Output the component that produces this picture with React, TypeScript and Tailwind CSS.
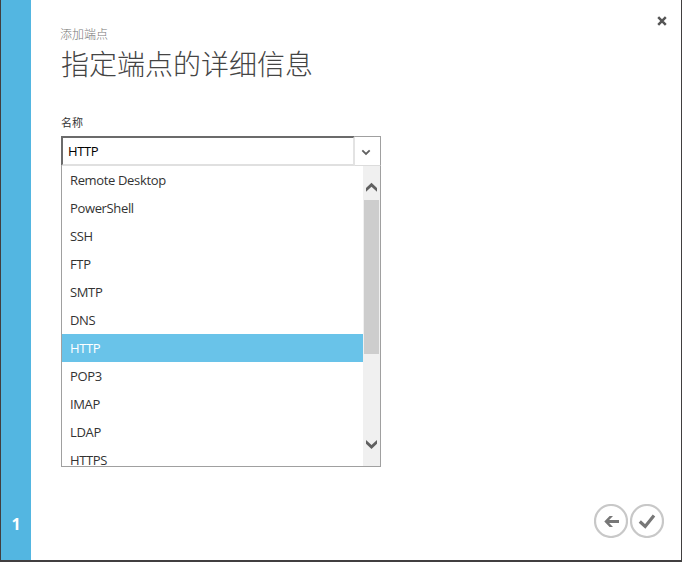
const endpoints = ["Remote Desktop", "PowerShell", "SSH", "FTP", "SMTP", "DNS", "HTTP", "POP3", "IMAP", "LDAP", "HTTPS"];
const selected = "HTTP";

function Scrollbar() {
  return (
    <div className="flex w-[17px] shrink-0 flex-col items-center bg-[#f0f0f0]">
      <div className="flex h-[34px] items-end pb-2">
        <svg width="13" height="10" viewBox="0 0 13 10" fill="#606060">
          <path d="M6.5 .7L12 6v3.7L6.5 4.8 1 9.700V6z" />
        </svg>
      </div>
      <div className="h-[154px] w-[15px] bg-[#cdcdcd]" />
      <div className="flex-1" />
      <div className="flex h-[27px] items-start">
        <svg width="13" height="10" viewBox="0 0 13 10" fill="#606060">
          <path d="M6.5 10L12 4.700V1L6.500 5.900 1 1v3.700z" />
        </svg>
      </div>
    </div>
  );
}

function ComboBox() {
  return (
    <div className="flex h-[331px] w-[320px] flex-col">
      <div className="flex h-[30px]">
        <div className="flex w-[294px] items-center border-2 border-t-[#6b6b6b] border-r-[#e3e3e3] border-b-[#e0e0e0] border-l-[#6b6b6b] pt-[2px] pl-[5px] text-[13px] tracking-[-0.35px] text-black">
          {selected}
        </div>
        <div className="flex w-[26px] items-center justify-center border border-l-0 border-t-[#a0a0a0] border-r-[#a0a0a0] border-b-[#dcdcdc] pt-px pr-[3px]">
          <svg width="10" height="8" viewBox="0 0 10 8" fill="none" stroke="#606060" strokeWidth="1.8">
            <path d="M1.300 2.400L5 6l3.700-3.600" />
          </svg>
        </div>
      </div>
      <div className="flex min-h-0 flex-1 border border-t-0 border-[#a0a0a0]">
        <ul className="flex-1 overflow-hidden">
          {endpoints.map((name) => (
            <li
              key={name}
              className={`flex h-7 items-center pt-[2px] pl-2 text-[13px] tracking-[-0.35px] ${name === selected ? "bg-[#69c3e9] text-white" : "text-[#333333]"}`}
            >
              {name}
            </li>
          ))}
        </ul>
        <Scrollbar />
      </div>
    </div>
  );
}

export default function App() {
  return (
    <div className="flex h-[562px] w-[682px] overflow-hidden border-r border-b-2 border-l border-[#413f40] bg-white font-['Open_Sans','Noto_Sans_CJK_SC',sans-serif]">
      <aside className="flex w-[30px] shrink-0 items-end justify-center bg-[#53b6e1] pb-[26px]">
        <span className="text-[16px] leading-5 font-bold text-white">1</span>
      </aside>
      <main className="flex flex-1 justify-between pr-[14px] pl-[30px]">
        <section className="pt-[26px]">
          <p className="-ml-px h-4 font-['Noto_Sans_CJK_SC',sans-serif] text-[12px] leading-4 font-light text-[#777777]">添加端点</p>
          <h1 className="h-[44px] font-['Noto_Sans_CJK_SC',sans-serif] text-[28px] leading-[42px] font-light text-[#444444]">指定端点的详细信息</h1>
          <p className="mt-[28px] mb-[6px] h-4 font-['Noto_Sans_CJK_SC',sans-serif] text-[11px] leading-4 text-[#333333]">名称</p>
          <ComboBox />
        </section>
        <section className="flex flex-col items-end justify-between pt-[16px] pb-[22px]">
          <button className="h-[10px] w-[10px]" aria-label="关闭">
            <svg width="10" height="10" viewBox="0 0 10 10" stroke="#555555" strokeWidth="2.500">
              <path d="M1.200 1.200l7.600 7.600M8.800 1.200L1.200 8.800" />
            </svg>
          </button>
          <div className="mr-[3px] flex gap-[2px]">
            <button aria-label="上一步">
              <svg width="34" height="34" viewBox="0 0 34 34" fill="none">
                <circle cx="17" cy="17" r="16" stroke="#c8c8c8" strokeWidth="2.200" />
                <path d="M25 17.500H13" stroke="#777777" strokeWidth="3" />
                <path d="M10.300 17.500L15.600 12h3.400l-5.300 5.500L19 23h-3.400z" fill="#777777" />
              </svg>
            </button>
            <button aria-label="完成">
              <svg width="34" height="34" viewBox="0 0 34 34" fill="none">
                <circle cx="17" cy="17" r="16" stroke="#c8c8c8" strokeWidth="2.200" />
                <path d="M9.800 17.500l5.400 5L24 11.500" stroke="#777777" strokeWidth="3.200" />
              </svg>
            </button>
          </div>
        </section>
      </main>
    </div>
  );
}
